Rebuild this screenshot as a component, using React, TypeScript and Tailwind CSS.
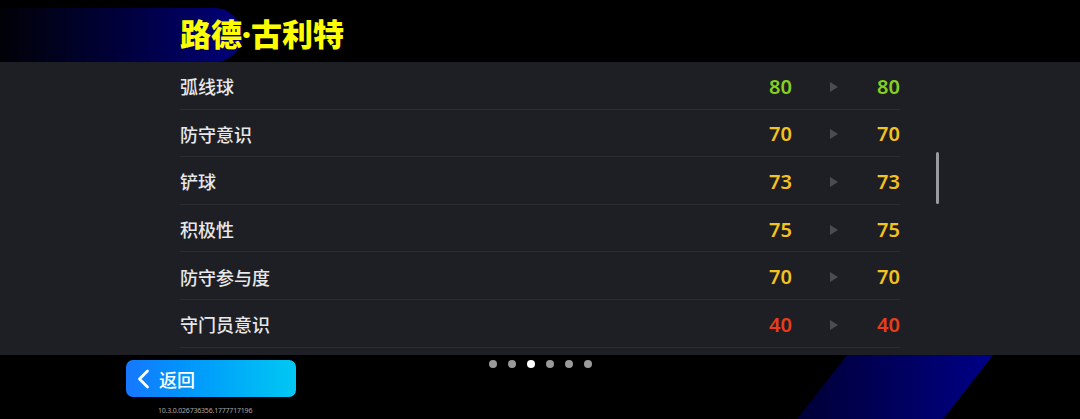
import React from "react";

type Stat = { name: string; from: number; to: number };

const STATS: Stat[] = [
  { name: "弧线球", from: 80, to: 80 },
  { name: "防守意识", from: 70, to: 70 },
  { name: "铲球", from: 73, to: 73 },
  { name: "积极性", from: 75, to: 75 },
  { name: "防守参与度", from: 70, to: 70 },
  { name: "守门员意识", from: 40, to: 40 },
];

function valueColor(v: number) {
  if (v >= 80) return "text-[#86d11f]";
  if (v >= 60) return "text-[#f3c21c]";
  return "text-[#e83d1b]";
}

export default function App() {
  return (
    <div
      className="relative h-[419px] w-[1080px] overflow-hidden bg-black"
      style={{ fontFamily: '"Noto Sans", "Noto Sans CJK SC", sans-serif' }}
    >
      {/* header streak */}
      <div className="absolute left-0 top-[8px] h-[54px] w-[242px] rounded-r-full bg-gradient-to-r from-[#010108] via-[#00003c] to-[#00007c]" />
      {/* bottom-right streak */}
      <div
        className="absolute bottom-0 left-[797px] h-[64px] w-[196px] bg-gradient-to-r from-[#000036] to-[#000088]"
        style={{ clipPath: "polygon(50px 0, 196px 0, 146px 64px, 0 64px)" }}
      />

      <header className="relative flex h-[62px] items-center pl-[180px] pt-[5px]">
        <h1
          className="text-[31px] font-black leading-none text-[#ffff00]"
          style={{ fontFamily: '"Noto Sans CJK SC", sans-serif' }}
        >
          路德<span style={{ fontFamily: '"Noto Sans", sans-serif' }}>·</span>古利特
        </h1>
      </header>

      <section className="relative h-[293px] bg-[#1e1f24]">
        <ul className="ml-[180px] w-[720px]">
          {STATS.map((s) => (
            <StatRow key={s.name} s={s} />
          ))}
        </ul>
        <div className="absolute left-[936px] top-[90px] h-[52px] w-[3px] rounded-full bg-[#9b9b9f]" />
      </section>

      <div className="relative grid grid-cols-[1fr_auto_1fr]">
        <div className="pl-[126px] pt-[5px]">
          <button className="flex h-[37px] w-[170px] items-center gap-[9px] rounded-[7px] bg-gradient-to-r from-[#1677ff] to-[#00c8f2] pl-[10px] text-white">
            <svg width="14" height="20" viewBox="0 0 14 20" fill="none">
              <polyline
                points="11.5,2 3.5,10 11.5,18"
                stroke="white"
                strokeWidth="2.8"
                strokeLinecap="round"
                strokeLinejoin="round"
              />
            </svg>
            <span
              className="text-[18px] font-medium leading-none"
              style={{ fontFamily: '"Noto Sans CJK SC", sans-serif' }}
            >
              返回
            </span>
          </button>
          <p className="ml-[32px] mt-[10px] text-[7px] leading-none tracking-[-0.2px] text-[#a8a8a8]">
            10.3.0.026736356.1777717196
          </p>
        </div>
        <div className="flex gap-[11px] pt-[5px]">
          {[0, 1, 2, 3, 4, 5].map((i) => (
            <span
              key={i}
              className={`h-[8px] w-[8px] rounded-full ${i === 2 ? "bg-white" : "bg-[#9a9a9a]"}`}
            />
          ))}
        </div>
        <div />
      </div>
    </div>
  );
}

function StatRow({ s }: { s: Stat }) {
  return (
    <li className="flex h-[47.6px] items-center border-b border-[#2c2d33] pt-[3px]">
      <span
        className="flex-1 text-[18px] font-medium text-[#e8e8ea]"
        style={{ fontFamily: '"Noto Sans CJK SC", sans-serif' }}
      >
        {s.name}
      </span>
      <span className={`w-[60px] text-right text-[20px] font-semibold ${valueColor(s.from)}`}>
        {s.from}
      </span>
      <svg className="ml-[38px]" width="8" height="10" viewBox="0 0 8 10">
        <polygon points="0,0 8,5 0,10" fill="#4b4c53" />
      </svg>
      <span className={`w-[62px] text-right text-[20px] font-semibold ${valueColor(s.to)}`}>
        {s.to}
      </span>
    </li>
  );
}
